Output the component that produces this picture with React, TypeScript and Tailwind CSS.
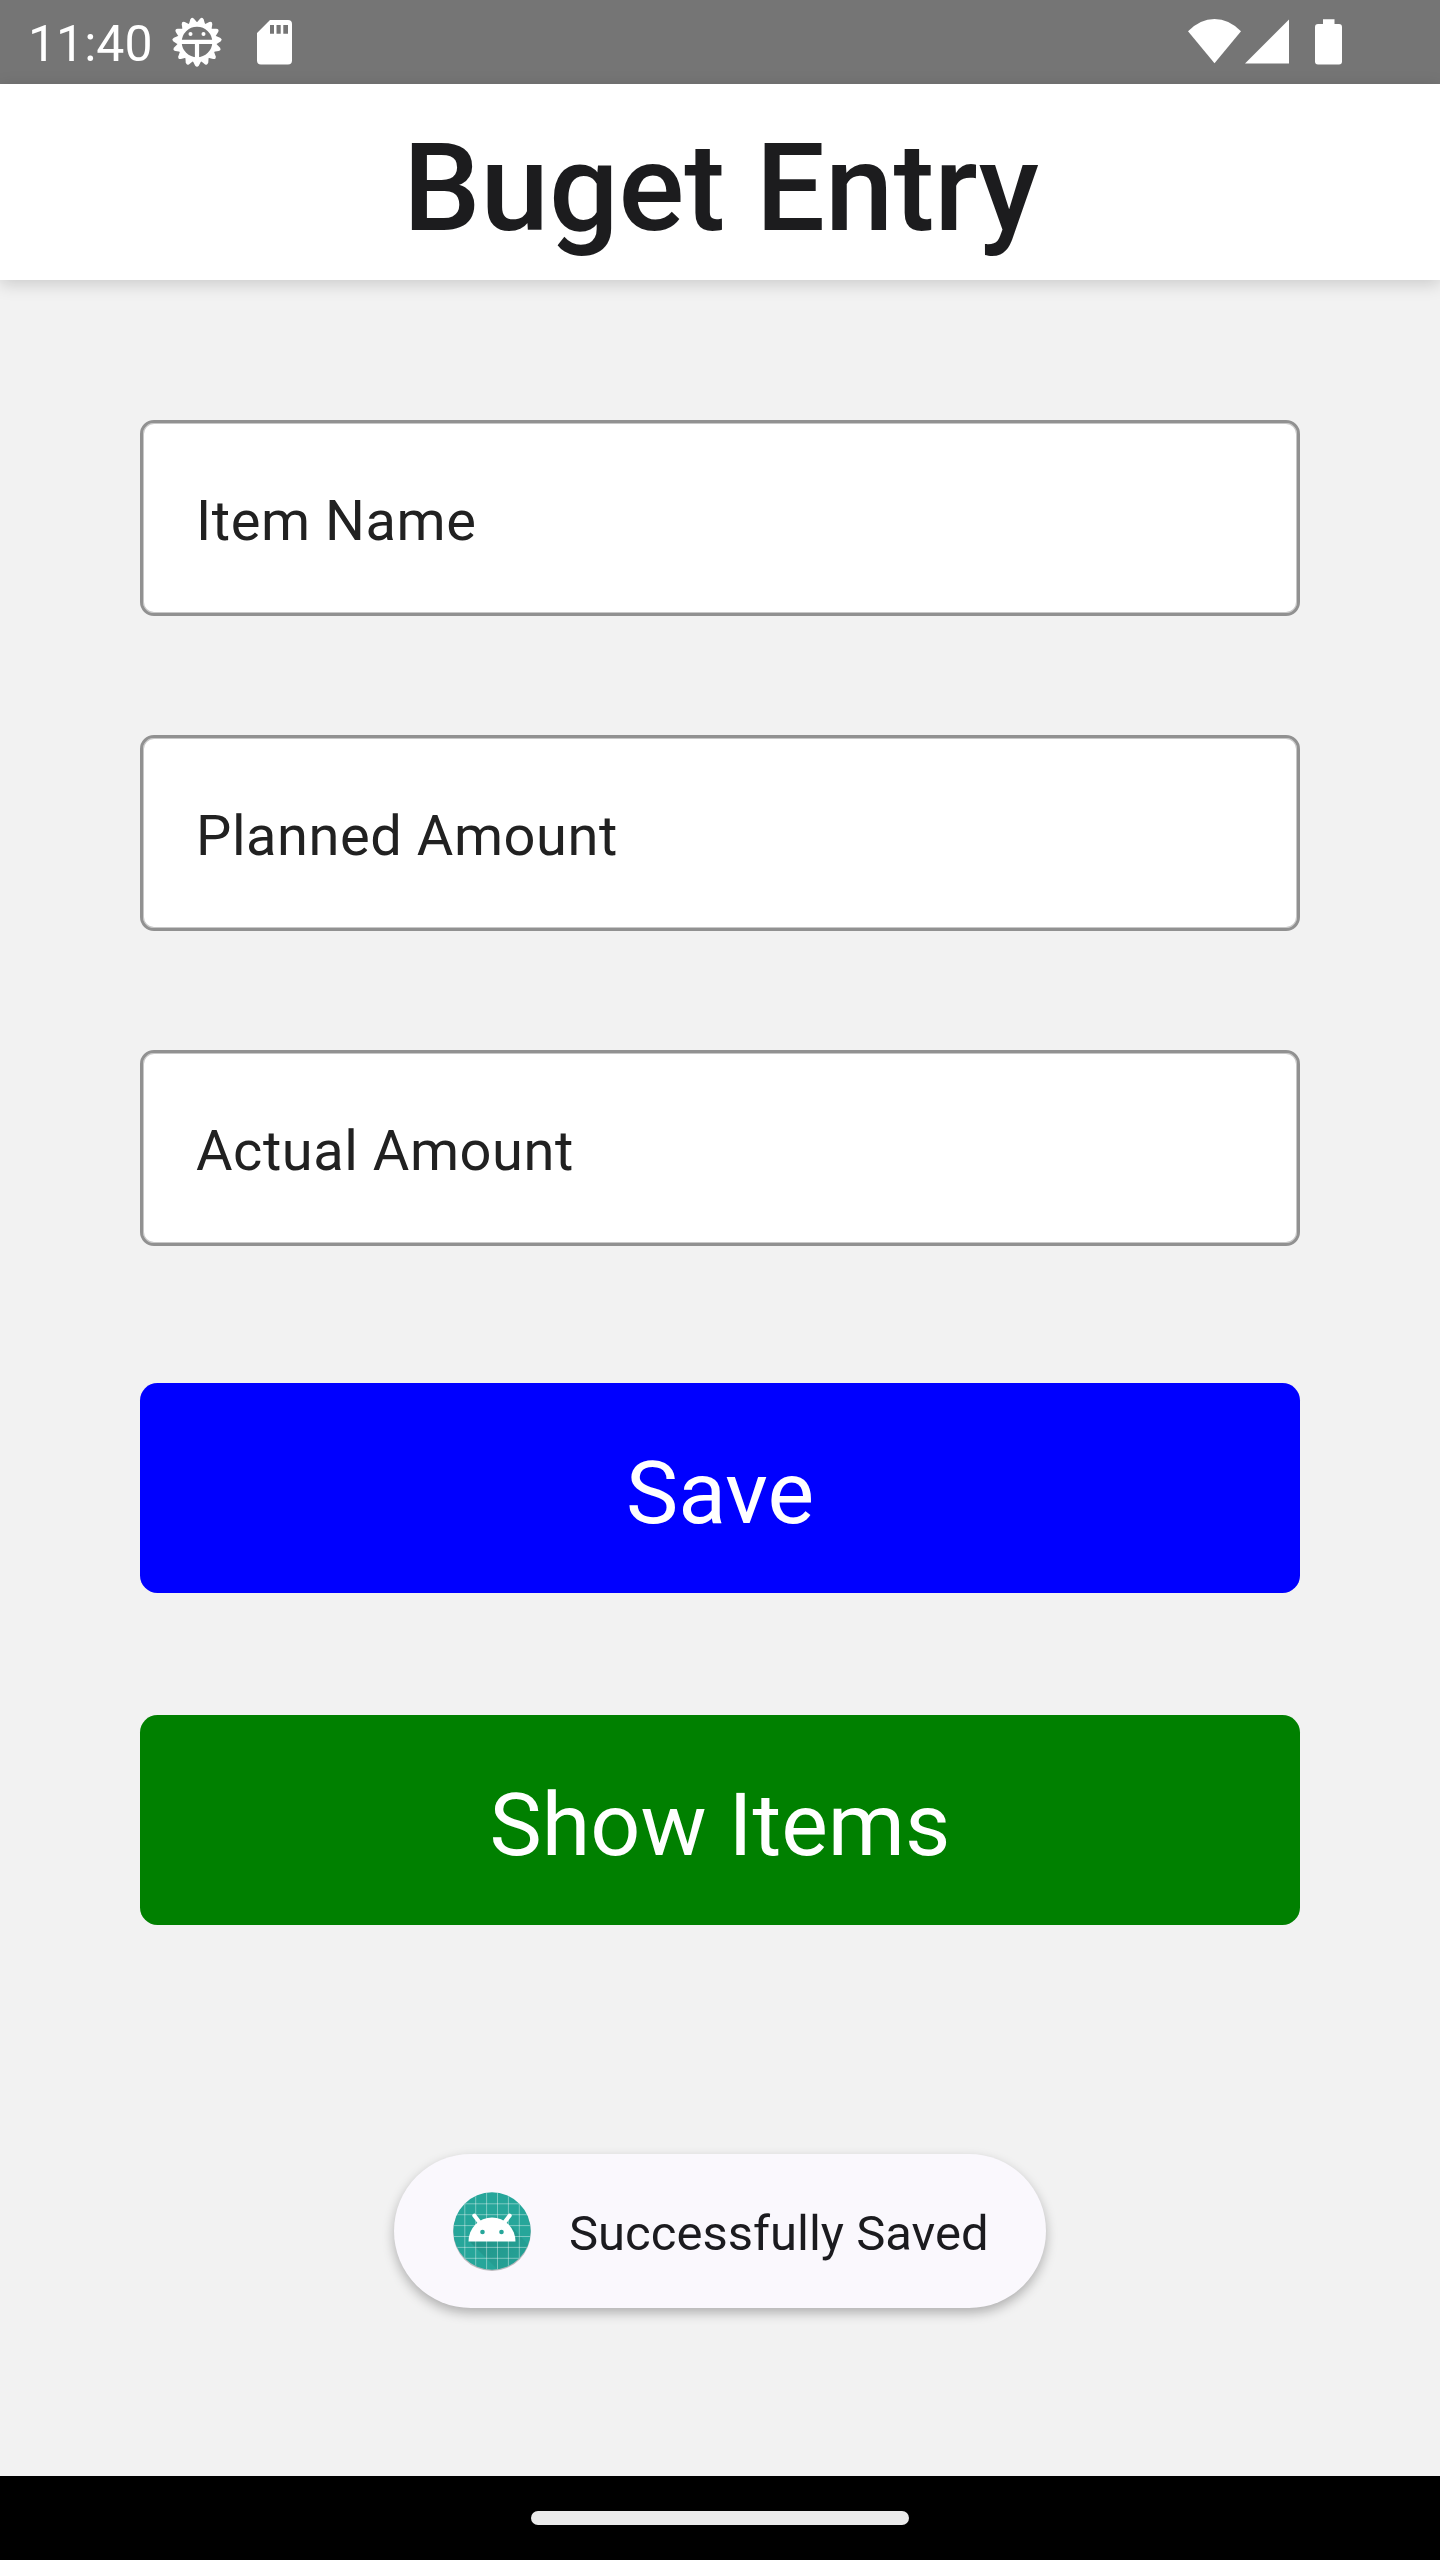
import React from "react";

function Field({ label }: { label: string }) {
  return (
    <div className="flex h-[196px] items-center rounded-[14px] border-[3px] border-[#919191] bg-white px-[53px] shadow-[inset_0_0_0_1px_#c8c8c8]">
      <span className="pt-1.5 text-[56px] leading-[66px] tracking-[0.55px] text-[#212121]">{label}</span>
    </div>
  );
}

function GearIcon() {
  const teeth = Array.from({ length: 15 }, (_, i) => i * 24 + 180);
  return (
    <svg className="h-[50px] w-[50px]" viewBox="-25 -25 50 50" fill="none" stroke="#fff">
      <circle r="17.6" strokeWidth="4.6" />
      {teeth.map((a) => (
        <path key={a} transform={`rotate(${a})`} d="M-4.2 -19 L-1.9 -23.4 Q0 -26 1.9 -23.4 L4.2 -19 Z" fill="#fff" stroke="none" />
      ))}
      <path d="M-17 -0.2H17M0 -0.2V17" strokeWidth="4.2" />
      <circle cx="-6.500" cy="-7.900" r="2" fill="#fff" stroke="none" />
      <circle cx="6.500" cy="-7.900" r="2" fill="#fff" stroke="none" />
    </svg>
  );
}

function SdIcon() {
  return (
    <svg className="h-[45px] w-[35px]" viewBox="0 0 35 45">
      <path fill="#fff" fillRule="evenodd" d="M13 0H31Q35 0 35 4V40.500Q35 44.500 31 44.500H4Q0 44.500 0 40.500V13ZM13 5V13.700H17V5ZM19.500 5V13.700H23.700V5ZM26.300 5V13.700H31V5Z" />
    </svg>
  );
}

function StatusBar() {
  return (
    <div className="flex h-[84px] items-start bg-[#757575] text-white">
      <span className="ml-[28px] mt-[16px] w-[144px] text-[50px] leading-[57px]">11:40</span>
      <div className="mt-[17px] h-[50px]"><GearIcon /></div>
      <div className="ml-[35px] mt-5"><SdIcon /></div>
      <svg className="ml-auto mt-[19px] h-[45px] w-[53px]" viewBox="0 0 53 45">
        <path fill="#fff" d="M0 12.300Q12 0 26.500 0T53 12.300L26.500 44.300Z" />
      </svg>
      <svg className="ml-[4px] mr-px mt-[19px] h-[45px] w-[44px]" viewBox="0 0 44 45">
        <path fill="#fff" d="M44 0.500V44.500H0Z" />
      </svg>
      <svg className="ml-[25px] mr-[98px] mt-[19px] h-[46px] w-[27px]" viewBox="0 0 27 46">
        <path fill="#fff" d="M8 0.300H19.500V5H24Q27 5 27 8V42.500Q27 45.500 24 45.500H3Q0 45.500 0 42.500V8Q0 5 3 5H8Z" />
      </svg>
    </div>
  );
}

function AndroidIcon() {
  const lines = [-27.2, -16.300, -5.400, 5.500, 16.400, 27.300];
  return (
    <svg className="h-[84px] w-[84px]" viewBox="-42 -42 84 84">
      <defs>
        <clipPath id="disc"><circle r="38.500" /></clipPath>
        <linearGradient id="cast" x1="0" y1="0" x2="1" y2="1">
          <stop offset="0" stopColor="#000" stopOpacity="0.13" />
          <stop offset="1" stopColor="#000" stopOpacity="0" />
        </linearGradient>
      </defs>
      <circle cy="1.200" r="38.800" fill="#000" opacity="0.25" />
      <circle r="38.700" fill="#26A69A" />
      <g clipPath="url(#disc)">
        <path d="M-23 10L8 41H42V20L20 -4Z" fill="url(#cast)" />
        {lines.map((v) => (
          <path key={v} d={`M${v} -40V40M-40 ${v}H40`} stroke="#fff" strokeOpacity="0.4" strokeWidth="1" />
        ))}
      </g>
      <path d="M-23.500 10.500A23.500 24 0 0 1 23.500 10.500Z" fill="#fff" />
      <path d="M-17.700 -15.500L-12 -8M17.700 -15.500L12 -8" stroke="#fff" strokeWidth="4" strokeLinecap="round" />
      <circle cx="-9.500" cy="1" r="2.300" fill="#26A69A" />
      <circle cx="9.500" cy="1" r="2.300" fill="#26A69A" />
    </svg>
  );
}

export default function App() {
  return (
    <div className="flex h-[2560px] w-[1440px] flex-col overflow-hidden bg-[#f2f2f2] font-['Roboto',sans-serif]">
      <StatusBar />
      <header className="flex h-[196px] justify-center bg-white shadow-[0_4px_16px_rgba(0,0,0,0.17)]">
        <h1 className="mt-[32px] pl-0.5 text-[122.800px] font-medium leading-[144px] text-[#1c1c1e]">Buget Entry</h1>
      </header>
      <main className="flex flex-1 flex-col px-[140px] pt-[140px]">
        <div className="flex flex-col gap-[119px]">
          <Field label="Item Name" />
          <Field label="Planned Amount" />
          <Field label="Actual Amount" />
        </div>
        <button className="mt-[137px] h-[210px] rounded-[17.500px] bg-[#0000ff] pt-2 text-[88px] leading-[103px] text-white">Save</button>
        <button className="mt-[122px] h-[210px] rounded-[17.500px] bg-[#008000] pt-2 text-[88px] leading-[103px] text-white">Show Items</button>
        <div className="mt-[229px] flex h-[154px] w-[652px] items-center self-center rounded-full bg-[#faf8fd] pl-[56px] shadow-[0_5px_12px_rgba(0,0,0,0.28)]">
          <AndroidIcon />
          <span className="ml-[35px] mt-1 whitespace-nowrap text-[49px] leading-[57px] text-[#1b1b1f]">Successfully Saved</span>
        </div>
      </main>
      <footer className="flex h-[84px] justify-center bg-black">
        <div className="mt-[35px] h-[14px] w-[378px] rounded-full bg-[#ebebeb]" />
      </footer>
    </div>
  );
}
